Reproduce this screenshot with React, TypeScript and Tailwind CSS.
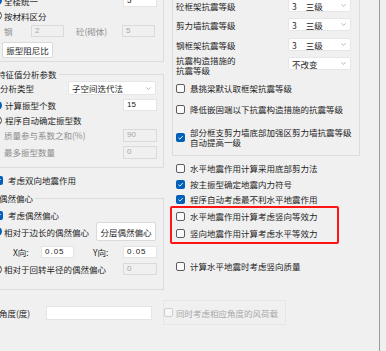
import React from 'react';

function Check({ checked = false, disabled = false }: { checked?: boolean; disabled?: boolean }) {
  if (checked) {
    return (
      <span className="w-[9px] h-[9px] shrink-0 rounded-[2px] bg-[#005fb8] flex items-center justify-center">
        <svg viewBox="0 0 10 10" className="w-[7px] h-[7px]">
          <path d="M2 5.3 L4.2 7.4 L8.2 2.8" stroke="white" strokeWidth="1.3" fill="none" />
        </svg>
      </span>
    );
  }
  return (
    <span
      className={
        disabled
          ? 'w-[9px] h-[9px] shrink-0 rounded-[2px] border border-[#cfcfcf] bg-[#f7f7f7]'
          : 'w-[9px] h-[9px] shrink-0 rounded-[2px] border border-[#5c5c5c] bg-[#fbfbfb]'
      }
    />
  );
}

function Radio({ checked = false }: { checked?: boolean }) {
  if (checked) {
    return (
      <span className="w-[9px] h-[9px] shrink-0 rounded-full bg-[#005fb8] flex items-center justify-center">
        <span className="w-[3px] h-[3px] rounded-full bg-white" />
      </span>
    );
  }
  return <span className="w-[9px] h-[9px] shrink-0 rounded-full border border-[#444] bg-[#fbfbfb]" />;
}

function Field({ value, disabled = false, className = '' }: { value: string; disabled?: boolean; className?: string }) {
  return (
    <div
      className={
        (disabled
          ? 'bg-[#f0f0f0] border-[#dadada] text-[#a6a6a6] '
          : 'bg-white border-[#e4e4e4] text-[#222] ') +
        'h-[12px] border flex items-center pl-[3px] text-[8px] font-["Liberation_Sans",sans-serif] ' +
        className
      }
    >
      {value}
    </div>
  );
}

function Chevron() {
  return (
    <svg viewBox="0 0 8 5" className="w-[5px] h-[3px] shrink-0">
      <path d="M0.5 0.5 L4 4 L7.5 0.5" stroke="#8a8a8a" strokeWidth="1" fill="none" />
    </svg>
  );
}

function Level({ children }: { children: React.ReactNode }) {
  return (
    <div className="ml-auto mr-[8px] w-[63px] h-[13px] shrink-0 bg-white border border-[#e6e6e6] rounded-[2px] flex items-center justify-between pl-[3px] pr-[4px]">
      <span className="flex items-center">{children}</span>
      <Chevron />
    </div>
  );
}

function GroupTitle({ text, pl }: { text: string; pl: string }) {
  return <div className={'-mt-[6px] h-[10px] w-fit bg-[#f0f0f0] pr-[2px] ' + pl}>{text}</div>;
}

function CheckRow({ text, checked = false, className = '' }: { text: string; checked?: boolean; className?: string }) {
  return (
    <div className={'h-[14px] flex items-center ' + className}>
      <Check checked={checked} />
      <span className="ml-[5px] whitespace-nowrap">{text}</span>
    </div>
  );
}

export default function App() {
  return (
    <div className="w-[386px] h-[351px] overflow-hidden bg-[#f0f0f0] flex text-[8.5px] leading-[10px] text-[#1e1e1e] font-['Noto_Sans_CJK_SC','Noto_Sans',sans-serif]">
      <div className="w-[379px] shrink-0 flex flex-col -mt-[7px]">
        <div className="flex">
          {/* left column */}
          <div className="-ml-[10px] w-[174px] shrink-0 flex flex-col">
            <div className="border-r border-b border-[#dcdcdc] pb-[3px] pr-[6px]">
              <div className="h-[15px] flex items-center pl-[3px]">
                <Radio checked />
                <span className="ml-[2px]">全楼统一</span>
                <Field value="5" className="ml-auto w-[34px] h-[13px]" />
              </div>
              <div className="h-[15px] flex items-center pl-[3px]">
                <Radio />
                <span className="ml-[2px]">按材料区分</span>
              </div>
              <div className="h-[15px] flex items-center pl-[14px] text-[#8c8c8c]">
                <span className="w-[27px]">钢</span>
                <Field value="2" disabled className="w-[33px]" />
                <span className="ml-[12px]">砼(砌体)</span>
                <Field value="5" disabled className="ml-auto mr-[2px] w-[33px]" />
              </div>
              <div className="mt-[4px] ml-[12px] w-[51px] h-[16px] bg-white border border-[#dadada] rounded-[2px] flex items-center justify-center">
                振型阻尼比
              </div>
            </div>

            <div className="mt-[12px] border-t border-r border-b border-[#dcdcdc] pb-[8px] pr-[6px]">
              <GroupTitle text="特征值分析参数" pl="pl-[7px]" />
              <div className="mt-[2px] h-[14px] flex items-center pl-[10px]">
                <span>分析类型</span>
                <div className="ml-auto mr-px w-[88px] h-[14px] bg-white border border-[#e6e6e6] rounded-[2px] flex items-center justify-between pl-[3px] pr-[4px]">
                  <span>子空间迭代法</span>
                  <Chevron />
                </div>
              </div>
              <div className="mt-[3px] h-[14px] flex items-center pl-[3px]">
                <Radio checked />
                <span className="ml-[3px]">计算振型个数</span>
                <Field value="15" className="ml-auto w-[34px]" />
              </div>
              <div className="mt-px h-[14px] flex items-center pl-[3px]">
                <Radio />
                <span className="ml-[3px]">程序自动确定振型数</span>
              </div>
              <div className="mt-px h-[14px] flex items-center pl-[14px] text-[#8c8c8c]">
                <span>质量参与系数之和(%)</span>
                <Field value="90" disabled className="ml-auto w-[34px] h-[13px]" />
              </div>
              <div className="mt-[3px] h-[14px] flex items-center pl-[14px] text-[#8c8c8c]">
                <span>最多振型数量</span>
                <Field value="0" disabled className="ml-auto w-[34px] h-[13px]" />
              </div>
            </div>

            <CheckRow text="考虑双向地震作用" checked className="mt-[5px] pl-[4px]" />

            <div className="mt-[11px] border-t border-r border-b border-[#dcdcdc] pb-[13px] pr-[6px]">
              <GroupTitle text="偶然偏心" pl="pl-[9px]" />
              <CheckRow text="考虑偶然偏心" checked className="mt-[5px] pl-[4px]" />
              <div className="h-[19px] flex items-center pl-[3px]">
                <Radio checked />
                <span className="ml-[2px]">相对于边长的偶然偏心</span>
                <div className="ml-auto mr-px w-[60px] h-[19px] bg-white border border-[#dadada] rounded-[2px] flex items-center justify-center">
                  分层偶然偏心
                </div>
              </div>
              <div className="mt-[4px] h-[14px] flex items-center pl-[23px]">
                <span className="w-[28px]">X向:</span>
                <Field value="0.05" className="w-[33px] tracking-[1px]" />
                <span className="ml-[19px]">Y向:</span>
                <Field value="0.05" className="ml-auto w-[34px] tracking-[1px]" />
              </div>
              <div className="mt-[3px] h-[14px] flex items-center pl-[3px]">
                <Radio />
                <span className="ml-[2px]">相对于回转半径的偶然偏心</span>
                <Field value="0" disabled className="ml-auto w-[34px]" />
              </div>
            </div>
          </div>

          {/* right column */}
          <div className="ml-[8px] w-[188px] shrink-0 flex flex-col">
            <div className="border-l border-r border-b border-[#dcdcdc] pl-[3px] pb-[8px]">
              <div className="mt-[6px] h-[13px] flex items-center">
                <span>砼框架抗震等级</span>
                <Level>3<span className="ml-[9px]">三级</span></Level>
              </div>
              <div className="mt-[6px] h-[13px] flex items-center">
                <span>剪力墙抗震等级</span>
                <Level>3<span className="ml-[9px]">三级</span></Level>
              </div>
              <div className="mt-[7px] h-[13px] flex items-center">
                <span>钢框架抗震等级</span>
                <Level>3<span className="ml-[9px]">三级</span></Level>
              </div>
              <div className="mt-[4px] h-[20px] flex items-start">
                <span>抗震构造措施的<br />抗震等级</span>
                <div className="ml-auto mt-[2px]">
                  <Level>不改变</Level>
                </div>
              </div>
              <CheckRow text="悬挑梁默认取框架抗震等级" className="mt-[6px]" />
              <CheckRow text="降低嵌固端以下抗震构造措施的抗震等级" className="mt-[7px]" />
              <div className="mt-[12px] flex items-start">
                <span className="mt-[5px]"><Check checked /></span>
                <span className="ml-[5px] leading-[9.5px] whitespace-nowrap">
                  部分框支剪力墙底部加强区剪力墙抗震等级<br />自动提高一级
                </span>
              </div>
            </div>

            <CheckRow text="水平地震作用计算采用底部剪力法" className="mt-[5px] pl-[4px]" />
            <CheckRow text="按主振型确定地震内力符号" checked className="mt-[2px] pl-[4px]" />
            <CheckRow text="程序自动考虑最不利水平地震作用" checked className="mt-px pl-[4px]" />
            <div className="-ml-[2px] w-[169px] border-2 border-[#ff1414] rounded-[2px] pt-px pb-[2px] pl-[4px]">
              <CheckRow text="水平地震作用计算考虑竖向等效力" />
              <CheckRow text="竖向地震作用计算考虑水平等效力" className="mt-[3px]" />
            </div>
            <CheckRow text="计算水平地震时考虑竖向质量" className="mt-[15px] pl-[4px]" />
          </div>
        </div>

        {/* bottom row */}
        <div className="mt-[10px] h-[25px] flex items-center">
          <span className="w-[46px] -ml-px">角度(度)</span>
          <div className="ml-px w-[106px] h-[14px] bg-white border border-[#e4e4e4]" />
          <div className="ml-[11px] w-[123px] h-[25px] border border-[#e6e6e6] flex items-center">
            <Check disabled />
            <span className="ml-[3px] text-[#a8a8a8] whitespace-nowrap">同时考虑相应角度的风荷载</span>
          </div>
        </div>
      </div>
      <div className="w-px h-full bg-[#9a9a9a] shrink-0" />
      <div className="flex-1" />
    </div>
  );
}
